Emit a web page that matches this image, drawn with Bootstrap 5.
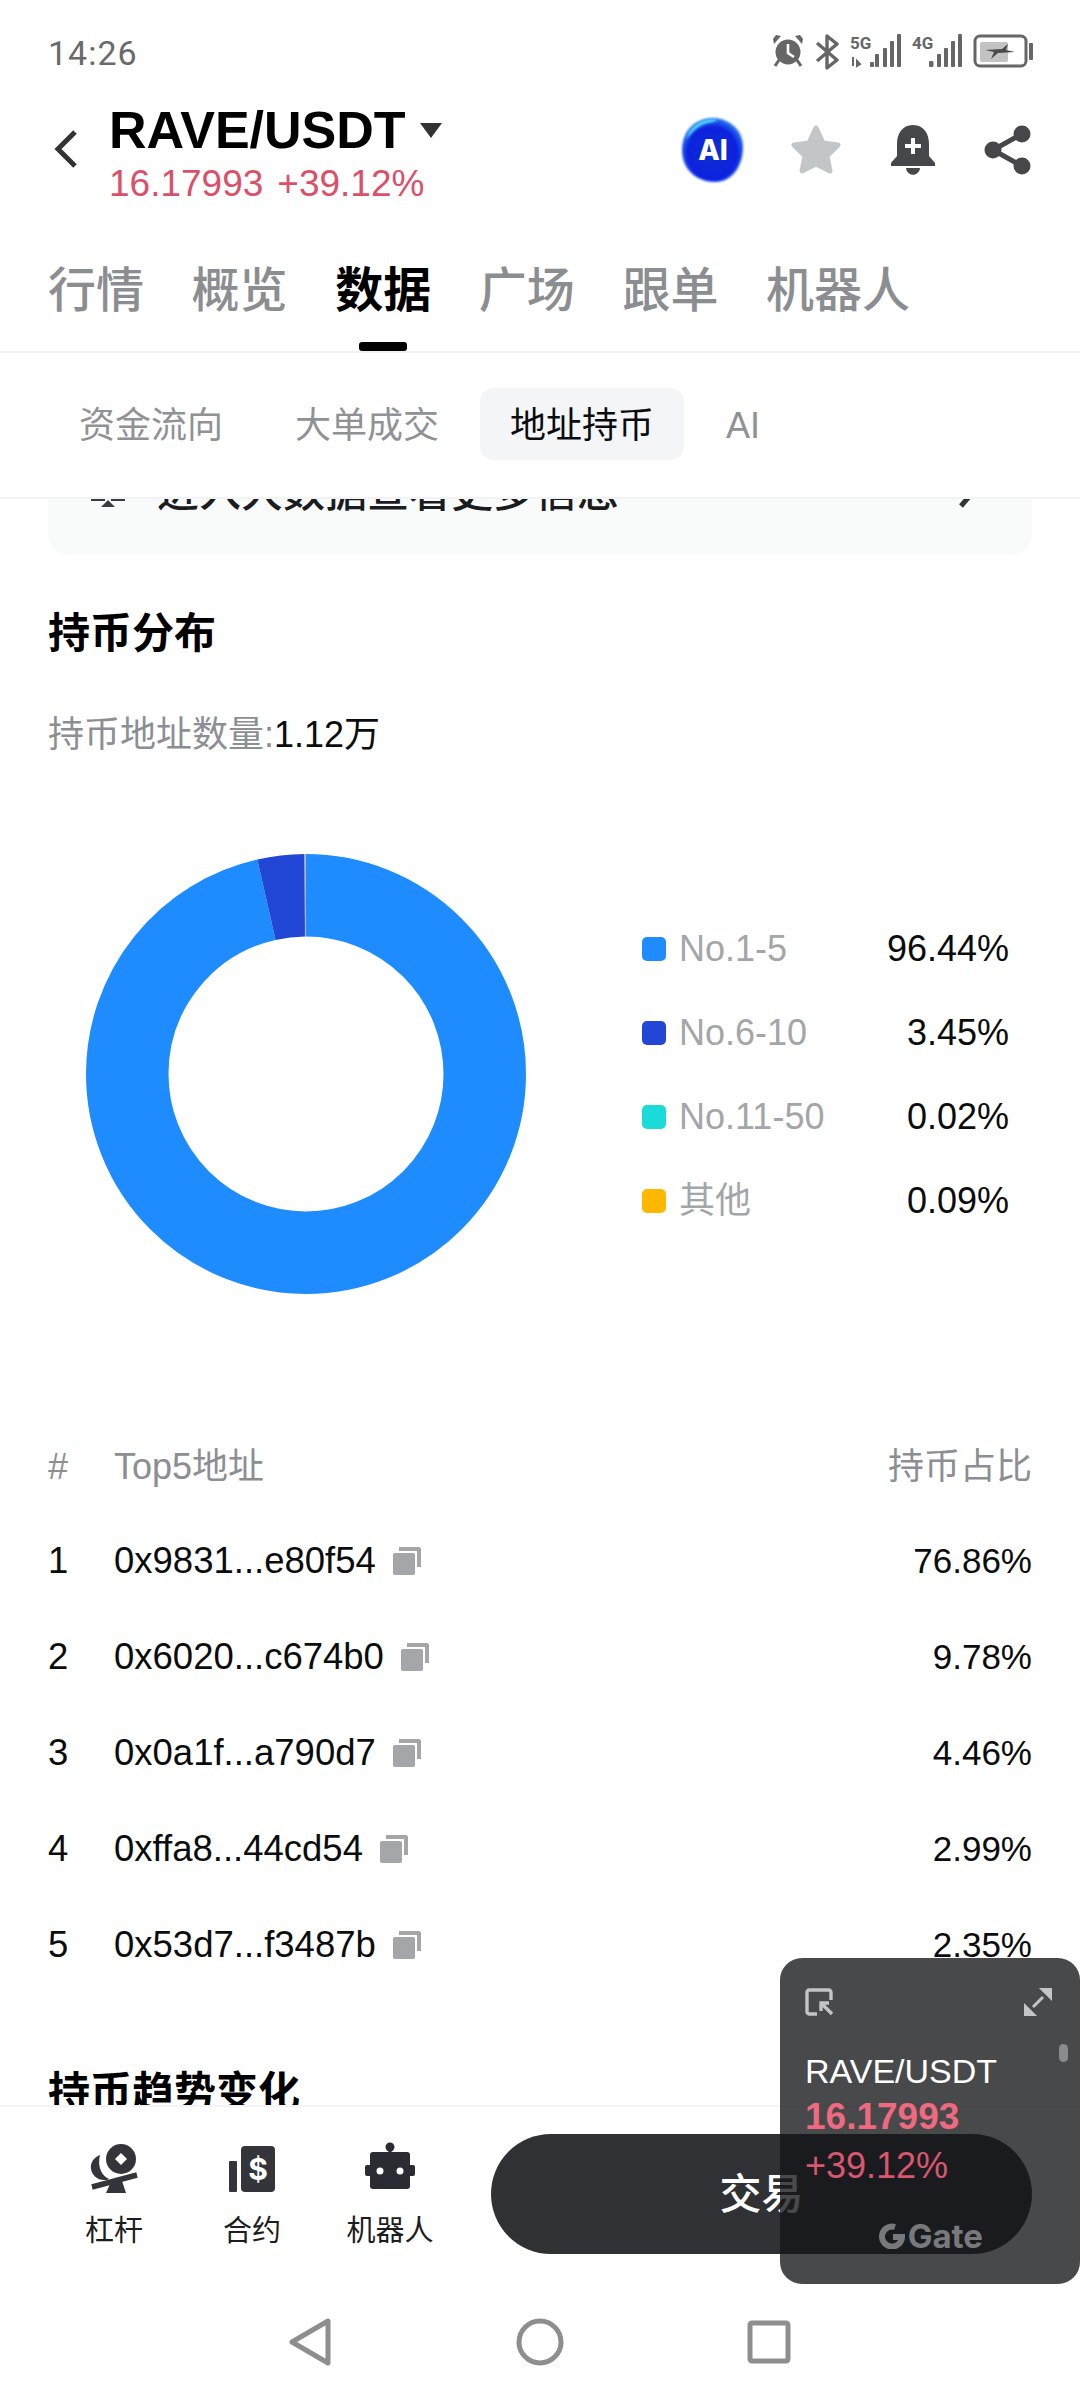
<!DOCTYPE html>
<html lang="zh-CN">
<head>
    <meta charset="UTF-8">
    <meta name="viewport" content="width=device-width, initial-scale=1.0">
    <title>RAVE/USDT 数据</title>
    <link href="https://cdn.jsdelivr.net/npm/bootstrap@5.3.0/dist/css/bootstrap.min.css" rel="stylesheet">
    <style>
        body {
            margin: 0;
            background: #fff;
            font-family: "Liberation Sans", "Noto Sans CJK SC", sans-serif;
            color: #0b0c0e;
        }
        .phone {
            width: 1080px;
            height: 2400px;
            overflow: hidden;
            background: #fff;
        }
        /* status bar */
        .status-row {
            height: 105px;
            padding: 34px 46px 0 48px;
        }
        .status-time {
            font-family: "Roboto", sans-serif;
            font-size: 34px;
            line-height: 38px;
            color: #6a6a6a;
            letter-spacing: 1px;
        }
        /* title */
        .title-row {
            height: 105px;
            padding: 0 49px 0 54px;
        }
        .pair-line { gap: 14px; }
        .pair-name {
            font-size: 52px;
            line-height: 50px;
            font-weight: 700;
            color: #000;
        }
        .pair-price {
            font-size: 37px;
            line-height: 40px;
            color: #dc4f69;
            margin-top: 9px;
        }
        .pair-change { margin-left: 14px; }
        .pair-block { margin-left: 31px; }
        .head-icons { gap: 49px; height: 90px; }
        .ai-blob { margin-right: -5px; }
        /* main tabs */
        .main-tabs {
            height: 143px;
            padding: 51px 48px 0;
            gap: 47.6px;
            border-bottom: 2px solid #f1f2f3;
            align-items: flex-start;
        }
        .main-tabs .nav-link {
            position: relative;
            padding: 0;
            font-size: 48px;
            line-height: 60px;
            color: #8b8e91;
            font-weight: 500;
        }
        .main-tabs .nav-link.active { color: #000; font-weight: 700; }
        .main-tabs .nav-link.active::after {
            content: "";
            position: absolute;
            left: 24px;
            top: 81px;
            width: 48px;
            height: 9px;
            background: #000;
            border-radius: 3px;
        }
        /* sub tabs */
        .sub-tabs {
            height: 146px;
            padding: 35px 33px 0 49px;
            gap: 32px;
            border-bottom: 2px solid #f2f3f4;
            align-items: flex-start;
            position: relative;
            z-index: 2;
            background: #fff;
        }
        .sub-tabs .nav-link {
            padding: 0 30px;
            height: 72px;
            line-height: 75px;
            font-size: 36px;
            color: #8f9295;
            background: transparent;
            border-radius: 14px;
        }
        .sub-tabs .nav-link:nth-child(2) { margin-left: -20px; }
        .sub-tabs .nav-link:nth-child(3) { margin-left: -21px; }
        .sub-tabs .nav-link:nth-child(4) { padding: 0; margin-left: 10px; }
        .sub-tabs .nav-link.active { color: #0b0c0e; background: #f4f5f6; }
        /* scroll content */
        .scroll-area {
            height: 1606px;
            overflow: hidden;
            padding: 0 48px;
        }
        .tip-card {
            height: 124px;
            margin-top: -69px;
            background: #f9fafa;
            border-radius: 20px;
            padding: 0 55px 0 42px;
            font-size: 42px;
            font-weight: 500;
            color: #1b1c1f;
            gap: 31px;
        }
        .section-title {
            font-size: 42px;
            line-height: 50px;
            font-weight: 700;
            color: #000;
            margin: 0;
        }
        .first-title { margin-top: 55px; }
        .holder-count {
            font-size: 36px;
            line-height: 44px;
            margin-top: 54px;
            color: #8b8e93;
        }
        .holder-count span { color: #0b0c0e; }
        .chart-row {
            margin-top: 97px;
            padding-left: 38px;
        }
        .legend-box {
            margin-left: 116px;
            margin-top: 2px;
            width: 367px;
        }
        .legend-row {
            height: 84px;
            font-size: 36px;
        }
        .legend-swatch {
            width: 24px;
            height: 24px;
            border-radius: 5px;
            margin-right: 13px;
        }
        .legend-name { color: #a3a6a9; }
        .holders-box { margin-top: 127px; }
        .holders-head {
            height: 92px;
            font-size: 36px;
            color: #8b8e93;
        }
        .holders-row {
            height: 96px;
            font-size: 36.5px;
        }
        .holder-share { font-size: 35px; }
        .rank-cell { width: 66px; }
        .copy-icon { margin-left: 17px; }
        .trend-title { margin-top: 75px; }
        /* bottom bar */
        .bottom-bar {
            height: 185px;
            border-top: 2px solid #f3f4f5;
            padding: 27px 48px 0 45px;
            align-items: flex-start;
            background: #fff;
        }
        .bar-item {
            width: 138px;
            padding-top: 8px;
            font-size: 29px;
            line-height: 36px;
            color: #1c1d20;
        }
        .bar-item svg { display: block; margin-bottom: 19px; }
        .trade-btn {
            width: 541px;
            height: 120px;
            margin-left: 32px;
            background: #303134;
            border: 0;
            color: #fff;
            font-size: 42px;
            font-weight: 500;
        }
        .sys-nav { height: 110px; padding: 0 0 6px 289px; }
        .sys-nav svg { display: block; }
        .sys-circle { margin-left: 185px; }
        .sys-square { margin-left: 183px; }
        /* floating window */
        .float-panel {
            left: 780px;
            top: 1958px;
            width: 300px;
            height: 326px;
            padding: 30px 28px 0 25px;
            background: rgba(21, 22, 24, .78);
            border-radius: 22px;
            z-index: 5;
        }
        .float-name {
            margin-top: 32px;
            font-size: 34px;
            line-height: 46px;
            color: #fff;
        }
        .float-price {
            font-size: 37px;
            line-height: 46px;
            font-weight: 700;
            color: #ef6a80;
        }
        .float-change {
            margin-top: 3px;
            font-size: 36px;
            line-height: 46px;
            color: #d9566f;
        }
        .float-logo {
            margin-top: 32px;
            margin-right: 69px;
            font-family: "Inter", sans-serif;
            font-size: 33px;
            line-height: 30px;
            font-weight: 700;
            color: #77797c;
            gap: 3px;
        }
        .float-scroll {
            right: 12px;
            top: 86px;
            width: 9px;
            height: 18px;
            background: #8a8b8d;
            border-radius: 5px;
        }
    </style>
</head>
<body>
<div class="phone position-relative">

    <!-- Status bar -->
    <div class="status-row d-flex justify-content-between align-items-start">
        <div class="status-time">14:26</div>
        <svg width="262" height="36" viewBox="0 0 262 36" fill="#666">
            <!-- alarm -->
            <circle cx="16" cy="18" r="12.5"/>
            <path d="M16 10v9l6 4" fill="none" stroke="#fff" stroke-width="2.6"/>
            <path d="M2 10 9 2 4 1 1 5zM30 10 23 2 28 1 31 5z"/>
            <path d="M7 26 3 32M25 26l4 6" stroke="#666" stroke-width="3"/>
            <!-- bluetooth -->
            <path d="M45 9 65 26 55 34V2l10 8-20 17" fill="none" stroke="#666" stroke-width="3.4" stroke-linejoin="round"/>
            <!-- 5G signal -->
            <text x="78" y="15" font-family="Roboto, sans-serif" font-size="17" font-weight="700">5G</text>
            <path d="M81 23v9M85 27l3 3-3 2z" stroke="#666" stroke-width="2"/>
            <rect x="98" y="28" width="4" height="5" rx="1"/>
            <rect x="103" y="20" width="4" height="13" rx="1"/>
            <rect x="111" y="14" width="4" height="19" rx="1"/>
            <rect x="118" y="7" width="4" height="26" rx="1"/>
            <rect x="125" y="0" width="4" height="33" rx="1"/>
            <!-- 4G signal -->
            <text x="140" y="15" font-family="Roboto, sans-serif" font-size="17" font-weight="700">4G</text>
            <rect x="157" y="27" width="4.5" height="6" rx="1"/>
            <rect x="165" y="20" width="4" height="13" rx="1"/>
            <rect x="172" y="14" width="4" height="19" rx="1"/>
            <rect x="179" y="7" width="4" height="26" rx="1"/>
            <rect x="186" y="0" width="4" height="33" rx="1"/>
            <!-- battery -->
            <rect x="203" y="2" width="51" height="30" rx="5" fill="none" stroke="#666" stroke-width="3"/>
            <rect x="208" y="8" width="28" height="20" rx="2" fill="#c2c2c2"/>
            <path d="M213 16l17-1 6-5-2 6 9 2-17 1-7 6 3-7z" fill="#4a4a4a"/>
            <rect x="257" y="9" width="4" height="17" rx="1"/>
        </svg>
    </div>

    <!-- Title row -->
    <div class="title-row d-flex justify-content-between align-items-start">
        <div class="d-flex align-items-start">
            <svg class="mt-4" width="24" height="40" viewBox="0 0 24 40"><path d="M21 3 4 20l17 17" fill="none" stroke="#333" stroke-width="5"/></svg>
            <div class="pair-block">
                <div class="pair-line d-flex align-items-center">
                    <span class="pair-name">RAVE/USDT</span>
                    <svg width="22" height="15" viewBox="0 0 22 15"><path d="M0 0h22L11 15z" fill="#333"/></svg>
                </div>
                <div class="pair-price">16.17993<span class="pair-change">+39.12%</span></div>
            </div>
        </div>
        <div class="head-icons d-flex align-items-center">
            <svg class="ai-blob" width="66" height="68" viewBox="0 0 66 68">
                <defs>
                    <radialGradient id="aiBlob" cx="50%" cy="55%" r="55%">
                        <stop offset="0" stop-color="#0a2fd0"/>
                        <stop offset=".75" stop-color="#0d22e0"/>
                        <stop offset="1" stop-color="#2b7cf2"/>
                    </radialGradient>
                    <filter id="softEdge"><feGaussianBlur stdDeviation="1"/></filter>
                </defs>
                <path d="M33 2c14 0 30 10 30 29 0 19-11 35-28 35C17 66 2 54 2 34 2 14 16 2 33 2z" fill="url(#aiBlob)" filter="url(#softEdge)"/>
                <path d="M6 24C9 10 21 3 34 3c6 0 2 3-6 4C18 9 12 16 6 24z" fill="#4fd6f5" filter="url(#softEdge)"/>
                <text x="33" y="44" text-anchor="middle" font-family="Inter, sans-serif" font-size="28" font-weight="800" fill="#fff">AI</text>
            </svg>
            <svg width="52" height="50" viewBox="0 0 52 50"><path d="M26 3l7 15 15 2-11 11 3 15-14-7-14 7 3-15L4 20l15-2z" fill="#c3c6c9" stroke="#c3c6c9" stroke-width="5" stroke-linejoin="round"/></svg>
            <svg width="44" height="50" viewBox="0 0 44 50" fill="#45474a">
                <path d="M22 0C11 0 6 9 6 19v12L0 38v3h44v-3l-6-7V19C38 9 33 0 22 0z"/>
                <path d="M15 43h14c-1 9-13 9-14 0z"/>
                <path d="M20 13h4v6h6v4h-6v6h-4v-6h-6v-4h6z" fill="#fff"/>
            </svg>
            <svg width="47" height="50" viewBox="0 0 47 50" fill="#45474a">
                <circle cx="38" cy="9" r="8.5"/><circle cx="9" cy="25" r="8.5"/><circle cx="38" cy="41" r="8.5"/>
                <path d="M38 9 9 25l29 16" fill="none" stroke="#45474a" stroke-width="5"/>
            </svg>
        </div>
    </div>

    <!-- Main tabs -->
    <nav class="nav main-tabs">
        <a class="nav-link" href="#">行情</a>
        <a class="nav-link" href="#">概览</a>
        <a class="nav-link active" href="#">数据</a>
        <a class="nav-link" href="#">广场</a>
        <a class="nav-link" href="#">跟单</a>
        <a class="nav-link" href="#">机器人</a>
    </nav>

    <!-- Sub tabs -->
    <nav class="nav sub-tabs">
        <a class="nav-link" href="#">资金流向</a>
        <a class="nav-link" href="#">大单成交</a>
        <a class="nav-link active" href="#">地址持币</a>
        <a class="nav-link" href="#">AI</a>
    </nav>

    <!-- Scrolled content -->
    <div class="scroll-area">
        <div class="tip-card d-flex align-items-center">
            <svg width="36" height="32" viewBox="0 0 36 32" fill="#3a3b3e"><path d="M1 22h14v3H1zM21 22h14v3H21zM18 24l7 7H11z"/></svg>
            <span class="flex-grow-1">进入大数据查看更多信息</span>
            <svg width="20" height="34" viewBox="0 0 20 34"><path d="M4 3l12 14L4 31" fill="none" stroke="#333" stroke-width="5"/></svg>
        </div>

        <h2 class="section-title first-title">持币分布</h2>
        <div class="holder-count">持币地址数量:<span>1.12万</span></div>

        <div class="chart-row d-flex align-items-center">
            <svg width="440" height="440" viewBox="0 0 440 440" class="flex-shrink-0">
                <g transform="rotate(-90 220 220)" fill="none" stroke-width="82.5">
                    <circle cx="220" cy="220" r="178.75" pathLength="100" stroke="#1e8cff" stroke-dasharray="96.44 3.56"/>
                    <circle cx="220" cy="220" r="178.75" pathLength="100" stroke="#2247d6" stroke-dasharray="3.45 96.55" stroke-dashoffset="-96.44"/>
                    <circle cx="220" cy="220" r="178.75" pathLength="100" stroke="#aeb0a8" stroke-dasharray="0.11 99.89" stroke-dashoffset="-99.89"/>
                </g>
            </svg>
            <div class="legend-box">
                <div class="legend-row d-flex align-items-center">
                    <span class="legend-swatch" style="background:#1e8cff"></span>
                    <span class="legend-name flex-grow-1">No.1-5</span><span>96.44%</span>
                </div>
                <div class="legend-row d-flex align-items-center">
                    <span class="legend-swatch" style="background:#2247d6"></span>
                    <span class="legend-name flex-grow-1">No.6-10</span><span>3.45%</span>
                </div>
                <div class="legend-row d-flex align-items-center">
                    <span class="legend-swatch" style="background:#1adbd8"></span>
                    <span class="legend-name flex-grow-1">No.11-50</span><span>0.02%</span>
                </div>
                <div class="legend-row d-flex align-items-center">
                    <span class="legend-swatch" style="background:#ffb800"></span>
                    <span class="legend-name flex-grow-1">其他</span><span>0.09%</span>
                </div>
            </div>
        </div>

        <div class="holders-box" id="holders">
            <div class="holders-head d-flex align-items-center">
                <span class="rank-cell">#</span>
                <span class="flex-grow-1">Top5地址</span>
                <span>持币占比</span>
            </div>
        </div>

        <h2 class="section-title trend-title">持币趋势变化</h2>
    </div>

    <!-- Bottom bar -->
    <div class="bottom-bar d-flex">
        <div class="bar-item d-flex flex-column align-items-center">
            <svg width="50" height="52" viewBox="0 0 50 52" fill="#34353a">
                <circle cx="32" cy="17" r="15"/>
                <path d="M32 11l6 6-6 6-6-6z" fill="#fff"/>
                <path d="M11 13c-6 2-10 8-9 14 1 6 6 11 13 11 2 0 4 0 5-1-7-3-12-12-9-24z"/>
                <path d="M3 45l45-12" stroke="#34353a" stroke-width="5.5"/>
                <path d="M21 42l12-3 4 12H17z"/>
            </svg>
            <span>杠杆</span>
        </div>
        <div class="bar-item d-flex flex-column align-items-center">
            <svg width="48" height="52" viewBox="0 0 48 52" fill="#34353a">
                <rect x="1" y="19" width="8" height="31" rx="1"/>
                <rect x="13" y="4" width="34" height="46" rx="4"/>
                <text x="30" y="38" text-anchor="middle" font-family="Inter, sans-serif" font-size="30" font-weight="700" fill="#fff">$</text>
            </svg>
            <span>合约</span>
        </div>
        <div class="bar-item d-flex flex-column align-items-center">
            <svg width="50" height="52" viewBox="0 0 50 52" fill="#2a2b33">
                <circle cx="25" cy="5" r="4.5"/>
                <rect x="23.5" y="6" width="3" height="6"/>
                <rect x="5" y="10" width="40" height="37" rx="3"/>
                <rect x="0" y="23" width="50" height="11" rx="2"/>
                <circle cx="15" cy="29" r="3.5" fill="#fff"/>
                <circle cx="35" cy="29" r="3.5" fill="#fff"/>
            </svg>
            <span>机器人</span>
        </div>
        <button type="button" class="btn trade-btn rounded-pill flex-shrink-0">交易</button>
    </div>

    <!-- Android nav -->
    <div class="sys-nav d-flex align-items-center">
        <svg width="42" height="48" viewBox="0 0 42 48"><path d="M3 24 39 3v42z" fill="none" stroke="#8e8e8e" stroke-width="5" stroke-linejoin="round"/></svg>
        <svg class="sys-circle" width="48" height="48" viewBox="0 0 48 48"><circle cx="24" cy="24" r="21" fill="none" stroke="#8e8e8e" stroke-width="5"/></svg>
        <svg class="sys-square" width="44" height="44" viewBox="0 0 44 44"><rect x="3" y="3" width="38" height="38" rx="2" fill="none" stroke="#8e8e8e" stroke-width="5"/></svg>
    </div>

    <!-- Floating price window -->
    <div class="float-panel position-absolute">
        <div class="float-scroll position-absolute"></div>
        <div class="d-flex justify-content-between">
            <svg width="28" height="28" viewBox="0 0 28 28" fill="none" stroke="#c3c4c5" stroke-width="3.4">
                <path d="M12 26H4c-1 0-2-1-2-2V4c0-1 1-2 2-2h20c1 0 2 1 2 2v8"/>
                <path d="M27 26 16 15M16 23v-8h8"/>
            </svg>
            <svg width="28" height="28" viewBox="0 0 28 28" fill="#c3c4c5">
                <path d="M17 0h11v11zM0 17v11h11zM9 19l10-10" stroke="#c3c4c5" stroke-width="3"/>
            </svg>
        </div>
        <div class="float-name">RAVE/USDT</div>
        <div class="float-price">16.17993</div>
        <div class="float-change">+39.12%</div>
        <div class="float-logo d-flex justify-content-end align-items-center">
            <svg width="26" height="26" viewBox="0 0 26 26" fill="none" stroke="#77797c" stroke-width="6"><path d="M16 4a10 10 0 1 0 7 10H14"/></svg>
            <span>Gate</span>
        </div>
    </div>
</div>

<script src="https://cdn.jsdelivr.net/npm/bootstrap@5.3.0/dist/js/bootstrap.bundle.min.js"></script>
<script>
    // top holders table
    const holders = [
        ['0x9831...e80f54', '76.86%'],
        ['0x6020...c674b0', '9.78%'],
        ['0x0a1f...a790d7', '4.46%'],
        ['0xffa8...44cd54', '2.99%'],
        ['0x53d7...f3487b', '2.35%']
    ];
    const box = document.getElementById('holders');
    holders.forEach(function (h, i) {
        const row = document.createElement('div');
        row.className = 'holders-row d-flex align-items-center';
        row.innerHTML = '<span class="rank-cell">' + (i + 1) + '</span>' +
            '<span>' + h[0] + '</span>' +
            '<svg class="copy-icon me-auto" width="28" height="28" viewBox="0 0 28 28" fill="#a5a6a9">' +
            '<rect x="0" y="6" width="22" height="22" rx="2"/>' +
            '<path d="M6 0h20c1 0 2 1 2 2v18h-4V4H6z"/></svg>' +
            '<span class="holder-share">' + h[1] + '</span>';
        box.appendChild(row);
    });
</script>
</body>
</html>
